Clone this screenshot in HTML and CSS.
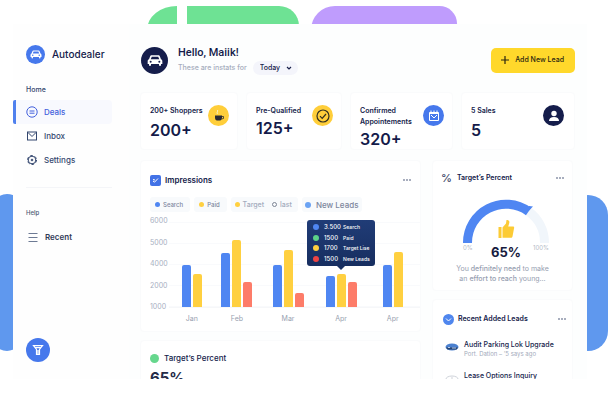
FILE: index.html
```html
<!DOCTYPE html>
<html lang="en">
<head>
<meta charset="utf-8">
<meta name="viewport" content="width=device-width, initial-scale=1">
<title>Autodealer</title>
<link rel="stylesheet" href="styles.css">
</head>
<body>
<svg class="defs" aria-hidden="true">
  <symbol id="car" viewBox="0 0 24 24">
    <path fill="#fff" fill-rule="evenodd" d="M7 5h10c1.200 0 2 .7 2.400 1.800L21 11c1.300.5 2 1.500 2 3v4h-2v1.500a1.500 1.500 0 0 1-3 0V18H6v1.500a1.500 1.500 0 0 1-3 0V18H1v-4c0-1.500.7-2.500 2-3l1.600-4.200C5 5.700 5.800 5 7 5zm.2 2L5.600 11h12.800l-1.600-4zM5.500 13a1.500 1.500 0 1 0 0 3 1.500 1.500 0 0 0 0-3zm13 0a1.500 1.500 0 1 0 0 3 1.500 1.500 0 0 0 0-3z"/>
  </symbol>
</svg>
<div class="stage">
  <div class="blob blob-green-a"></div>
  <div class="blob blob-green-b"></div>
  <div class="blob blob-purple"></div>
  <div class="blob blob-left"></div>
  <div class="blob blob-right"></div>

  <div class="app">
    <aside class="sidebar">
      <a class="brand" href="#"><span class="brand-mark"><svg width="12" height="12"><use href="#car"/></svg></span>Autodealer</a>
      <nav class="nav">
        <a class="nav-home" href="#">Home</a>
        <a class="nav-item active" href="#">
          <svg width="12" height="12" viewBox="0 0 12 12" fill="none" stroke="currentColor"><circle cx="6" cy="6" r="5.200"/><path d="M3.500 5h5M3.500 7.200h5"/></svg>Deals</a>
        <a class="nav-item" href="#">
          <svg width="12" height="12" viewBox="0 0 12 12" fill="none" stroke="currentColor"><rect x="1.500" y="2" width="9" height="8"/><path d="M2 2.500l4 4 4-4"/></svg>Inbox</a>
        <a class="nav-item" href="#">
          <svg width="12" height="12" viewBox="0 0 12 12" fill="none" stroke="currentColor"><circle cx="6" cy="6" r="3.800"/><circle cx="6" cy="6" r="1" fill="currentColor" stroke-width=".5"/><circle cx="6" cy="6" r="4.500" stroke-width="1" stroke-dasharray="2.700 2.010"/></svg>Settings</a>
      </nav>
      <hr class="rule">
      <div class="help">Help</div>
      <a class="recent" href="#"><svg width="10" height="10" viewBox="0 0 10 10" stroke="#6d7a94"><path d="M.5 1.500h9M.5 5.500h9M.5 9.500h9"/></svg>Recent</a>
      <button class="filter" aria-label="Filter"><svg width="12" height="12" viewBox="0 0 12 12" fill="none" stroke="#fff" stroke-width="1.200"><path d="M1.500 1.700h9L7.500 5.500v5h-3v-5zM3.500 3.700h5M6 6v4.500"/></svg></button>
    </aside>

    <main class="main">
      <header class="top">
        <span class="avatar"><svg width="16" height="16"><use href="#car"/></svg></span>
        <div class="greet">
          <h1>Hello, Maiik!</h1>
          <div class="period">
            <label for="period">These are instats for</label>
            <span class="select">
              <select id="period"><option>Today</option></select>
              <svg width="6" height="6" viewBox="0 0 6 6" fill="none" stroke="#18204a" stroke-width="1.200"><path d="M1 2l2 2 2-2"/></svg>
            </span>
          </div>
        </div>
        <button class="add"><svg width="8" height="8" viewBox="0 0 8 8" stroke="#2a2510" stroke-width="1.200"><path d="M4 0v8M0 4h8"/></svg>Add New Lead</button>
      </header>

      <section class="stats">
        <article class="stat">
          <div><h2>200+ Shoppers</h2><strong class="low">200+</strong></div>
          <span class="badge yellow"><svg width="12" height="14" viewBox="0 0 12 14"><path fill="#2b2a33" d="M2 6.500h7v2c0 2-1 3-2 3H4c-1.200 0-2-1-2-3z"/><path fill="none" stroke="#2b2a33" stroke-width=".8" d="M9 7.500h1.500V9.500L8.500 10"/><path fill="none" stroke="#f7efc0" d="M4.500 5c-1.500-1.500 1-2.500 0-4"/></svg></span>
        </article>
        <article class="stat">
          <div><h2>Pre-Qualified</h2><strong>125+</strong></div>
          <span class="badge yellow"><svg width="14" height="14" viewBox="0 0 14 14" fill="none" stroke="#33301f" stroke-width="1.200"><circle cx="7" cy="7" r="6"/><path d="M4 7.200l2.200 2.200L10 5"/></svg></span>
        </article>
        <article class="stat">
          <div><h2>Confirmed<br>Appointements</h2><strong>320+</strong></div>
          <span class="badge blue"><svg width="12" height="12" viewBox="0 0 12 12" fill="none" stroke="#fff"><path d="M1.500 2.500h9v8h-9zM3 .5v2M6 .5v2M9 .5v2M2 3.500h8M3 5l3 3 3-3"/></svg></span>
        </article>
        <article class="stat">
          <div><h2>5 Sales</h2><strong class="low">5</strong></div>
          <span class="badge navy"><svg width="12" height="12" viewBox="0 0 12 12" fill="#fff"><circle cx="6" cy="3.500" r="2.700"/><path d="M1 11c0-2.500 2-4 5-4s5 1.500 5 4z"/></svg></span>
        </article>
      </section>

      <div class="columns">
        <div class="left">
          <section class="panel impressions">
            <div class="panel-head">
              <span class="square"><svg width="7" height="7" viewBox="0 0 7 7" fill="none" stroke="#fff"><path d="M1 4l1.500 1.200L6 1.500M1 2.500l2 .5"/></svg></span>
              <h3>Impressions</h3>
              <button class="more" aria-label="More"><i></i><i></i><i></i></button>
            </div>
            <div class="legend">
              <span class="chip small"><i class="dot c-blue"></i>Search</span>
              <span class="chip small"><i class="dot c-yellow"></i>Paid</span>
              <span class="chip wide"><i class="dot c-yellow"></i>Target<i class="ring"></i>last</span>
              <span class="chip large"><i class="dot c-sky"></i>New Leads</span>
            </div>
            <div class="chart">
              <div class="axis"><span>6000</span><span>5000</span><span>4000</span><span>2000</span><span>1000</span></div>
              <div class="plot">
                <div class="group"><i class="bar c-blue" style="height:50%"></i><i class="bar c-yellow" style="height:39%"></i></div>
                <div class="group"><i class="bar c-blue" style="height:63%"></i><i class="bar c-yellow" style="height:79%"></i><i class="bar c-red" style="height:30%"></i></div>
                <div class="group"><i class="bar c-blue" style="height:50%"></i><i class="bar c-yellow" style="height:67%"></i><i class="bar c-red" style="height:17%"></i></div>
                <div class="group"><i class="bar c-blue" style="height:36%"></i><i class="bar c-yellow" style="height:39%"></i><i class="bar c-red" style="height:30%"></i>
                  <div class="tip">
                    <i class="dot c-blue"></i><b>3.500</b><span>Search</span>
                    <i class="dot c-green"></i><b>1500</b><span>Paid</span>
                    <i class="dot c-yellow"></i><b>1700</b><span>Target Lise</span>
                    <i class="dot c-crimson"></i><b>1500</b><span>New Leads</span>
                  </div>
                </div>
                <div class="group"><i class="bar c-blue" style="height:49%"></i><i class="bar c-yellow" style="height:65%"></i></div>
              </div>
              <div class="months"><span>Jan</span><span>Feb</span><span>Mar</span><span>Apr</span><span>Apr</span></div>
            </div>
          </section>
          <section class="panel percent">
            <div class="panel-head"><i class="disc"></i><h3>Target’s Percent</h3></div>
            <strong>65%</strong>
          </section>
        </div>

        <div class="right">
          <section class="panel target">
            <div class="panel-head">
              <span class="pct">%</span>
              <h3>Target’s Percent</h3>
              <button class="more" aria-label="More"><i></i><i></i><i></i></button>
            </div>
            <div class="gauge">
              <svg width="86" height="46" viewBox="0 0 86 46" fill="none" stroke-width="9">
                <path stroke="#f1f6fb" d="M65.600 12.500A38.500 38.500 0 0 1 81.500 44"/>
                <path stroke="#4f86f2" d="M4.500 44A38.500 38.500 0 0 1 65.600 12.500"/>
                <path fill="#4f86f2" stroke="none" d="M66 7l4 .500-4 4z"/>
                <g fill="#fccb35" stroke="none"><rect x="35.500" y="28" width="3" height="11"/><path d="M39.500 28.500l3.500-4 .500-3.500c2.500-.5 3.500 1.500 2.500 4l-.8 2.500H50c1 0 1.500 1 1 2l-1.500 8c-.2.800-.7 1.300-1.500 1.300h-8.500z"/></g>
              </svg>
              <div class="ends"><span>0%</span><strong>65%</strong><span>100%</span></div>
            </div>
            <p>You <b>definitely need</b> to make<br>an <b>effort to reach</b> young...</p>
          </section>
          <section class="panel leads">
            <div class="panel-head">
              <span class="check"><svg width="7" height="7" viewBox="0 0 7 7" fill="none" stroke="#fff"><path d="M1 2.500L3.500 5 6 2.500"/></svg></span>
              <h3>Recent Added Leads</h3>
              <button class="more" aria-label="More"><i></i><i></i><i></i></button>
            </div>
            <ul>
              <li><svg width="14" height="8" viewBox="0 0 14 8"><ellipse cx="7" cy="4" rx="6.500" ry="3.500" fill="#4b80cf"/><path fill="#27436f" d="M1 4.500h12L11.500 6.500h-9z"/><path stroke="#b9cbe6" d="M3 4.500h2M7 5h4"/></svg><div><h4>Audit Parking Lok Upgrade</h4><small>Port. Dation – ’5 says ago</small></div></li>
              <li><svg width="14" height="8" viewBox="0 0 14 8" fill="none" stroke="#cfd3da"><ellipse cx="7" cy="5" rx="6" ry="3"/><path d="M3 6h2M6 4h2M9 6h2"/></svg><div><h4>Lease Options Inquiry</h4></div></li>
            </ul>
          </section>
        </div>
      </div>
    </main>
  </div>
</div>
</body>
</html>
```
FILE: styles.css
```css
* { box-sizing: border-box; margin: 0; padding: 0; }
body { font: 500 8px/10px Inter, "Liberation Sans", sans-serif; color: #141b4a; background: #fff; }
button, select { font: inherit; color: inherit; border: 0; background: none; cursor: pointer; }
a { color: inherit; text-decoration: none; }
svg { display: block; flex: none; }
i { font-style: normal; flex: none; }
.defs { position: absolute; width: 0; height: 0; }

.stage { position: relative; height: 100vh; padding: 24px 25px 29px 13px; overflow: hidden; display: flex; }
.blob { position: absolute; }
.blob-green-a { left: 147px; top: 6px; width: 30px; height: 24px; background: #6ee294; border-top-left-radius: 30px 24px; }
.blob-green-b { left: 187px; top: 6px; width: 112px; height: 24px; background: #6ee294; border-top-right-radius: 20px; }
.blob-purple { left: 311px; top: 6px; width: 146px; height: 24px; background: #bf9cfd; border-radius: 30px 22px 0 0; }
.blob-left { left: -8px; top: 194px; width: 30px; height: 157px; background: #5f98ee; border-radius: 22px; }
.blob-right { right: 4px; top: 195px; width: 40px; height: 156px; background: #5f98ee; border-radius: 20px; }

.app { position: relative; flex: 1; display: flex; overflow: hidden; background: #fff; }
.sidebar { width: 116px; flex: none; display: flex; flex-direction: column; padding: 20px 0 17px; background: #fefefe; }
.brand { display: flex; align-items: center; gap: 7px; padding-left: 13px; font-size: 10px; line-height: 20px; }
.brand-mark { width: 19px; height: 19px; border-radius: 50%; background: #4678ec; display: grid; place-items: center; }
.nav { display: flex; flex-direction: column; margin-top: 21px; color: #33466e; }
.nav-home { padding-left: 13px; margin-bottom: 5px; font-size: 7px; }
.nav-item { display: flex; align-items: center; gap: 6px; height: 24px; margin-right: 17px; padding-left: 13px; }
.nav-item.active { padding-left: 10px; border-left: 3px solid #4f80ee; background: #f8f9fe; border-radius: 2px 4px 4px 2px; color: #4260dc; }
.rule { border: 0; border-top: 1px solid #f4f5f8; margin: 15px 17px 0 13px; }
.help { margin-top: 20px; padding-left: 13px; font-size: 6px; color: #4d5873; }
.recent { display: flex; align-items: center; gap: 7px; margin-top: 14px; padding-left: 15px; font-weight: 600; color: #313b57; }
.filter { width: 24px; height: 24px; border-radius: 50%; background: #4678ec; display: grid; place-items: center; margin: auto 0 0 13px; }

.main { flex: 1; min-width: 0; padding: 19px 12px 0 11px; background: #fdfefe; }
.top { display: flex; align-items: center; height: 34px; }
.avatar { width: 27px; height: 27px; border-radius: 50%; background: #151d4b; display: grid; place-items: center; margin-left: 1px; }
.greet { margin-left: 10px; }
h1 { font: 500 11px/16px Roboto, Inter, sans-serif; }
.period { display: flex; align-items: center; gap: 6px; font-size: 7px; color: #a6adbd; }
.select { position: relative; }
.select select { appearance: none; height: 14px; width: 45px; padding: 0 14px 0 7px; border-radius: 7px; background: #f4f5fb; color: #141b4a; font-size: 7px; font-weight: 500; display: block; }
.select svg { position: absolute; right: 6px; top: 4px; pointer-events: none; }
.add { margin-left: auto; height: 25px; padding: 0 11px 0 10px; border-radius: 5px; background: #ffd82b; color: #2a2510; display: flex; align-items: center; gap: 6px; font-size: 7px; }

.stats { display: grid; grid-template-columns: 98fr 96fr 103fr 114fr; gap: 8px; margin-top: 15px; }
.stat { height: 58px; padding: 12px 8px 0 9px; background: #fff; border: 1px solid #fafbfc; border-radius: 4px; display: flex; justify-content: space-between; }
.stat > div { white-space: nowrap; }
h2 { font-size: 7px; line-height: 11px; font-weight: 600; }
.stat strong { display: block; font-size: 16px; line-height: 20px; margin-top: 2px; font-weight: 600; }
h2:has(br) + strong { margin-top: 0; }
.stat .low { margin-top: 4px; }
.badge { width: 21px; height: 21px; border-radius: 50%; display: grid; place-items: center; flex: none; }
.stat:last-child { padding-right: 10px; }
.yellow { background: #ffce3a; }
.blue { background: #4678ec; }
.navy { background: #151d4b; }

.columns { display: grid; grid-template-columns: 281fr 143fr; gap: 11px; margin-top: 10px; }
.panel { background: #fff; border: 1px solid #fafbfc; border-radius: 4px; }
.panel-head { display: flex; align-items: center; height: 12px; }
h3 { font-size: 8px; line-height: 12px; font-weight: 600; }
.more { margin-left: auto; display: flex; gap: 1px; padding: 4px 0; }
.more i { width: 2px; height: 2px; border-radius: 50%; background: #8b93a8; }
.impressions { height: 172px; padding: 13px 0 0 9px; }
.impressions .panel-head { gap: 4px; padding-right: 9px; }
.square { width: 11px; height: 11px; border-radius: 2px; background: #4272e6; display: grid; place-items: center; }
.legend { display: flex; gap: 4px; margin-top: 11px; font-size: 7px; color: #7d869c; white-space: nowrap; }
.chip { display: flex; align-items: center; gap: 3px; height: 15px; padding: 0 6px 0 4px; background: #f8fafc; border-radius: 3px; }
.chip.small { font-size: 6px; padding: 0 7px 0 5px; }
.chip.wide { color: #a3abbc; }
.chip.large { font-size: 8px; gap: 5px; padding: 0 4px 0 3px; }
.dot { width: 5px; height: 5px; border-radius: 50%; }
.ring { width: 5px; height: 5px; border-radius: 50%; border: 1px solid #7d8494; margin-left: 5px; }
.large .dot { width: 6px; height: 6px; }
.c-blue { background: #4f86f2; }
.c-sky { background: #6ba3f3; }
.c-yellow { background: #ffd040; }
.c-red { background: #fd7c69; }
.c-green { background: #5cd388; }
.c-crimson { background: #ee4444; }

.chart { display: grid; grid-template-columns: 19px 1fr; margin-top: 4px; color: #a8afbf; font-size: 7px; font-weight: 400; }
.axis { display: flex; flex-direction: column; justify-content: space-between; height: 96px; }
.plot, .months { display: grid; grid-template-columns: 46fr 45fr 58fr 49fr 55fr; }
.plot { height: 86px; margin-top: 6px; background: linear-gradient(#f9fafc 1px, transparent 1px) 0 0 / 100% 21px; border-bottom: 1px solid #f6f7f9; }
.group { position: relative; display: flex; justify-content: center; align-items: flex-end; gap: 2px; }
.bar { width: 9px; border-radius: 2px 2px 0 0; }
.months { grid-column: 2; margin-top: 2px; text-align: center; color: #989fb0; }
.tip { position: absolute; z-index: 1; left: 50%; bottom: 41px; transform: translateX(-50%); width: 68px; height: 46px; padding: 2px 0 2px 6px; border-radius: 3px; background: linear-gradient(#203c77, #172e60); color: #fff; display: grid; grid-template-columns: 11px 19px 1fr; align-items: center; font-size: 6px; white-space: nowrap; }
.tip .dot { width: 6px; height: 6px; }
.tip b { font-weight: 500; }
.tip span { font-size: 5px; font-weight: 500; }
.tip::after { content: ""; position: absolute; left: 50%; top: 100%; margin-left: -4px; border: 4px solid transparent; border-top-color: #172e60; }
.percent { margin-top: 8px; padding: 11px 9px; }
.percent .panel-head { gap: 5px; }
.percent h3 { font-weight: 500; }
.disc { width: 9px; height: 9px; border-radius: 50%; background: #66d78d; }
.percent strong { display: block; margin-top: 4px; font-size: 15px; line-height: 20px; font-weight: 700; color: #252c48; }

.target { height: 131px; padding: 11px 8px 0; margin-right: 2px; }
.target .panel-head { gap: 5px; }
.pct { font-size: 11px; color: #3c4668; }
.right h3 { font-size: 7px; }
.gauge { width: 86px; margin: 15px 0 0 22px; }
.ends { display: flex; justify-content: space-between; color: #b3b9c6; font-size: 6px; font-weight: 400; line-height: 6px; }
.ends span { flex: 1; }
.ends span:last-child { text-align: right; }
.ends strong { font-size: 13px; line-height: 15px; font-weight: 700; color: #171c3e; }
.target p { margin-top: 4px; text-align: center; font-size: 7px; line-height: 10px; font-weight: 400; color: #969eb0; }
.target p b { font-weight: 500; }
.leads { margin-top: 8px; padding: 13px 6px 11px 10px; margin-right: 2px; }
.leads .panel-head { gap: 4px; }
.check { width: 11px; height: 11px; border-radius: 50%; background: #4f86ee; display: grid; place-items: center; }
ul { list-style: none; margin-top: 15px; }
li { display: flex; gap: 5px; height: 31px; margin-left: 2px; white-space: nowrap; }
li svg { margin-top: 3px; }
h4 { font-size: 7px; line-height: 10px; font-weight: 500; }
small { display: block; font-size: 6px; line-height: 8px; font-weight: 400; color: #a3aabb; }
```
